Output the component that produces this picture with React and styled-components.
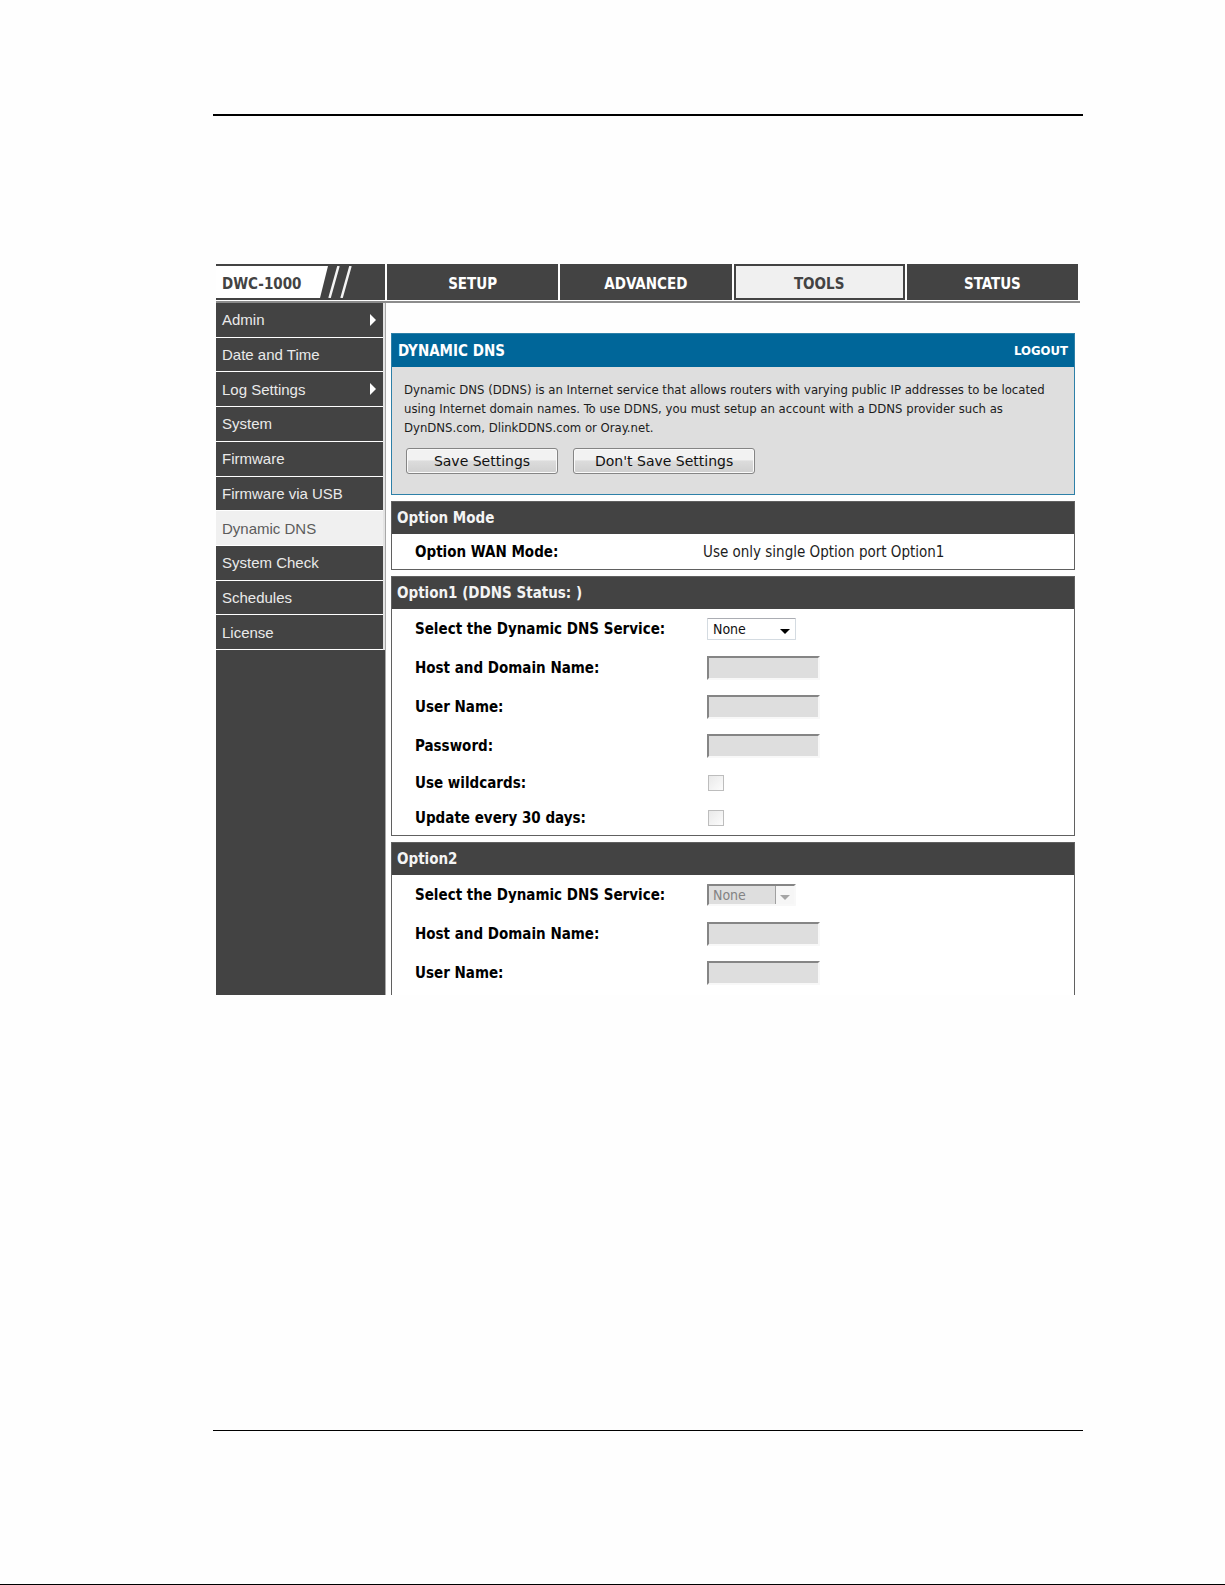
import React, { useState } from 'react';
import styled, { createGlobalStyle, ThemeProvider } from 'styled-components';

const theme = {
  color: {
    page: '#fefefe',
    dark: '#434343',
    light: '#f0f0f0',
    panel: '#dedede',
    blue: '#006699',
    blueBorder: '#2d80a8',
    line: '#8c8c8c',
    text: '#1c1c1c',
  },
  font: {
    ui: "'DejaVu Sans Condensed', 'DejaVu Sans', sans-serif",
    menu: "'Liberation Sans', Arial, sans-serif",
    button: "'DejaVu Sans', sans-serif",
  },
};

const TABS = ['SETUP', 'ADVANCED', 'TOOLS', 'STATUS'];

const MENU = [
  { label: 'Admin', more: true },
  { label: 'Date and Time' },
  { label: 'Log Settings', more: true },
  { label: 'System' },
  { label: 'Firmware' },
  { label: 'Firmware via USB' },
  { label: 'Dynamic DNS' },
  { label: 'System Check' },
  { label: 'Schedules' },
  { label: 'License' },
];

const ServiceRow = ({ id, disabled }) => (
  <Row>
    <Label htmlFor={id}>Select the Dynamic DNS Service:</Label>
    <SelectBox>
      <Select id={id} disabled={disabled} defaultValue="None">
        <option>None</option>
        <option>DynDNS</option>
        <option>DlinkDDNS</option>
        <option>Oray</option>
      </Select>
      <Arrow $disabled={disabled}>
        <svg width="10" height="5" viewBox="0 0 10 5">
          <path d="M0 0h10L5 5z" fill="currentColor" />
        </svg>
      </Arrow>
    </SelectBox>
  </Row>
);

const TextRow = ({ id, label, type = 'text' }) => (
  <Row>
    <Label htmlFor={id}>{label}</Label>
    <TextInput id={id} type={type} disabled />
  </Row>
);

const CheckRow = ({ id, label }) => {
  const [checked, setChecked] = useState(false);

  return (
    <Row $compact>
      <Label htmlFor={id}>{label}</Label>
      <Checkbox
        id={id}
        type="checkbox"
        checked={checked}
        onChange={() => setChecked(!checked)}
        disabled
      />
    </Row>
  );
};

const App = () => (
  <ThemeProvider theme={theme}>
    <GlobalStyle />
    <Page>
      <Rule $weight={2} />
      <Screen>
        <TopBar>
          <Brand>
            <BrandName>DWC-1000</BrandName>
            <svg width="40" height="32" viewBox="0 0 40 32">
              <path d="M0 0h8L0 32z" fill="#fff" />
              <path
                d="M18.500 0L9.500 32M30.500 0L21.500 32"
                stroke="#f4f4f4"
                strokeWidth="2.500"
              />
            </svg>
          </Brand>
          {TABS.map((tab) => (
            <Tab key={tab} href="#" $active={tab === 'TOOLS'}>
              {tab}
            </Tab>
          ))}
        </TopBar>
        <Columns>
          <Sidebar>
            <Menu>
              {MENU.map(({ label, more }) => (
                <MenuItem key={label} href="#" $active={label === 'Dynamic DNS'}>
                  {label}
                  {more && (
                    <svg width="6" height="12" viewBox="0 0 6 12">
                      <path d="M0 0l6 6-6 6z" fill="#fff" />
                    </svg>
                  )}
                </MenuItem>
              ))}
            </Menu>
          </Sidebar>
          <Main>
            <Intro>
              <IntroHead>
                <IntroTitle>DYNAMIC DNS</IntroTitle>
                <Logout href="#">LOGOUT</Logout>
              </IntroHead>
              <IntroBody>
                <IntroText>
                  Dynamic DNS (DDNS) is an Internet service that allows routers
                  with varying public IP addresses to be located using Internet
                  domain names. To use DDNS, you must setup an account with a
                  DDNS provider such as DynDNS.com, DlinkDDNS.com or Oray.net.
                </IntroText>
                <Buttons>
                  <Button type="submit">Save Settings</Button>
                  <Button type="reset">Don't Save Settings</Button>
                </Buttons>
              </IntroBody>
            </Intro>
            <Panel>
              <PanelTitle>Option Mode</PanelTitle>
              <Row $compact>
                <Label as="span">Option WAN Mode:</Label>
                <span>Use only single Option port Option1</span>
              </Row>
            </Panel>
            <Panel>
              <PanelTitle>Option1 (DDNS Status: )</PanelTitle>
              <ServiceRow id="service1" />
              <TextRow id="host1" label="Host and Domain Name:" />
              <TextRow id="user1" label="User Name:" />
              <TextRow id="password1" label="Password:" type="password" />
              <CheckRow id="wildcards1" label="Use wildcards:" />
              <CheckRow id="update1" label="Update every 30 days:" />
            </Panel>
            <Panel $open>
              <PanelTitle>Option2</PanelTitle>
              <ServiceRow id="service2" disabled />
              <TextRow id="host2" label="Host and Domain Name:" />
              <TextRow id="user2" label="User Name:" />
            </Panel>
          </Main>
        </Columns>
      </Screen>
      <Rule $weight={1} />
    </Page>
  </ThemeProvider>
);

const GlobalStyle = createGlobalStyle`
  * {
    box-sizing: border-box;
  }

  body {
    margin: 0;
    background: ${theme.color.page};
    color: ${theme.color.text};
    font-family: ${theme.font.ui};
    font-size: 15px;
  }
`;

const Page = styled.div`
  display: flex;
  flex-direction: column;
  min-height: 100vh;
  padding: 114px 142px 153px 213px;
  border-bottom: 1px solid #000;
`;

const Rule = styled.hr`
  width: 100%;
  margin: 0;
  border: none;
  border-top: ${({ $weight }) => $weight}px solid #000;
`;

const Screen = styled.div`
  flex: 1;
  padding: 148px 3px 0;
`;

const TopBar = styled.header`
  display: grid;
  grid-template-columns: 169px repeat(4, 1fr);
  gap: 2px;
  padding: 0 2px 1px 0;
  border-bottom: 2px solid ${({ theme }) => theme.color.line};
`;

const Brand = styled.div`
  display: flex;
  align-items: center;
  height: 36px;
  background: ${({ theme }) => theme.color.dark};
`;

const BrandName = styled.span`
  width: 104px;
  height: 32px;
  padding: 2px 0 0 6px;
  background: #fff;
  color: ${({ theme }) => theme.color.dark};
  font-weight: bold;
  line-height: 32px;
`;

const Tab = styled.a`
  display: flex;
  justify-content: center;
  align-items: center;
  height: 36px;
  padding-top: 3px;
  border: 2px solid ${({ theme }) => theme.color.dark};
  background: ${({ theme, $active }) =>
    $active ? theme.color.light : theme.color.dark};
  color: ${({ theme, $active }) => ($active ? theme.color.dark : '#fff')};
  font-weight: bold;
  text-decoration: none;
`;

const Columns = styled.div`
  display: flex;
`;

const Sidebar = styled.aside`
  flex: none;
  width: 170px;
  border-right: 1px solid #a8a8a8;
  background: ${({ theme }) => theme.color.dark};
`;

const Menu = styled.nav`
  display: grid;
  grid-auto-rows: 1fr;
  height: 347px;
  border-right: 2px solid #e4e4e4;
`;

const MenuItem = styled.a`
  display: flex;
  justify-content: space-between;
  align-items: center;
  padding: 0 7px 0 6px;
  border-bottom: 1px solid #fff;
  background: ${({ theme, $active }) =>
    $active ? theme.color.light : theme.color.dark};
  color: ${({ $active }) => ($active ? '#5c5c5c' : '#eaeaea')};
  font-family: ${({ theme }) => theme.font.menu};
  text-decoration: none;
`;

const Main = styled.main`
  display: flex;
  flex: 1;
  flex-direction: column;
  gap: 6px;
  padding: 30px 5px 0;
`;

const Intro = styled.section`
  border: 1px solid ${({ theme }) => theme.color.blueBorder};
  background: ${({ theme }) => theme.color.panel};
`;

const IntroHead = styled.div`
  display: flex;
  justify-content: space-between;
  align-items: center;
  height: 33px;
  padding: 0 6px;
  background: ${({ theme }) => theme.color.blue};
`;

const IntroTitle = styled.h1`
  margin: 0;
  color: #fff;
  font-size: 15px;
`;

const Logout = styled.a`
  color: #fff;
  font-size: 13px;
  font-weight: bold;
  text-decoration: none;
`;

const IntroBody = styled.div`
  padding: 13px 12px 20px;
`;

const IntroText = styled.p`
  margin: 0;
  font-size: 13px;
  line-height: 19px;
`;

const Buttons = styled.div`
  display: flex;
  gap: 15px;
  padding: 11px 2px 0;
`;

const Button = styled.button`
  min-width: 152px;
  height: 26px;
  padding: 0 21px;
  border: 1px solid #858585;
  border-radius: 3px;
  background: linear-gradient(#f2f2f2 45%, #dcdcdc 50%, #cfcfcf);
  box-shadow: inset 0 0 0 1px #fafafa;
  color: #111;
  font-family: ${({ theme }) => theme.font.button};
  font-size: 14px;
`;

const Panel = styled.section`
  padding-bottom: ${({ $open }) => ($open ? 3 : 0)}px;
  border: 1px solid #606060;
  border-bottom-width: ${({ $open }) => ($open ? 0 : 1)}px;
  background: #fff;
`;

const PanelTitle = styled.h2`
  margin: 0;
  padding-left: 5px;
  background: ${({ theme }) => theme.color.dark};
  color: #f4f4f4;
  font-size: 15px;
  line-height: 32px;
`;

const Row = styled.div`
  display: flex;
  align-items: center;
  height: ${({ $compact }) => ($compact ? 35 : 39)}px;
  padding-left: 23px;
`;

const Label = styled.label`
  flex: none;
  width: 288px;
  color: #000;
  font-weight: bold;
`;

const SelectBox = styled.div`
  position: relative;
  width: 89px;
  height: 22px;
  margin-left: 4px;
`;

const Select = styled.select`
  appearance: none;
  width: 100%;
  height: 100%;
  padding: 0 5px;
  border: 1px solid #d4dbe1;
  border-top-color: #abadb3;
  border-radius: 1px;
  background: #fff;
  color: #111;
  font-family: ${({ theme }) => theme.font.ui};
  font-size: 14px;

  &:disabled {
    padding: 0 4px;
    border: 2px solid;
    border-color: #858585 #f8f8f8 #f8f8f8 #858585;
    background: ${({ theme }) => theme.color.panel};
    color: #838383;
    opacity: 1;
  }
`;

const Arrow = styled.span`
  position: absolute;
  top: 2px;
  right: 2px;
  bottom: 2px;
  display: flex;
  justify-content: center;
  align-items: center;
  width: 19px;
  padding-top: 5px;
  border-left: 1px solid ${({ $disabled }) => ($disabled ? '#a0a0a0' : '#fff')};
  background: ${({ $disabled }) => ($disabled ? '#f6f6f6' : '#fff')};
  color: ${({ $disabled }) => ($disabled ? '#a5a5a5' : '#000')};
  pointer-events: none;
`;

const TextInput = styled.input`
  width: 113px;
  height: 24px;
  margin-left: 4px;
  border: 2px solid;
  border-color: #858585 #f8f8f8 #f8f8f8 #858585;
  background: ${({ theme }) => theme.color.panel};
`;

const Checkbox = styled.input`
  appearance: none;
  width: 16px;
  height: 16px;
  margin: 0 0 0 5px;
  border: 1px solid #bdbdbd;
  background: linear-gradient(135deg, #e9e9e9, #fcfcfc);
`;

export default App;
